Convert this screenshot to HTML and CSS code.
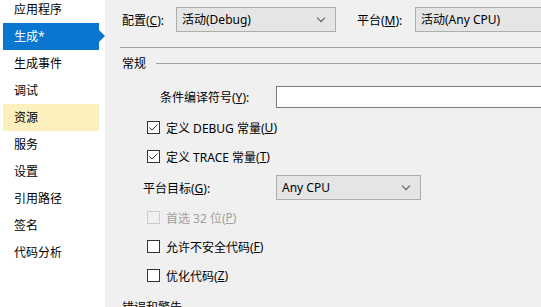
FILE: index.html
```html
<!DOCTYPE html>
<html lang="zh-CN">
<head>
    <meta charset="UTF-8">
    <title>生成</title>
    <link rel="stylesheet" href="styles.css">
</head>
<body>
    <div class="window">
        <ul class="nav">
            <li>应用程序</li>
            <li class="active">生成*</li>
            <li>生成事件</li>
            <li>调试</li>
            <li class="hover">资源</li>
            <li>服务</li>
            <li>设置</li>
            <li>引用路径</li>
            <li>签名</li>
            <li>代码分析</li>
        </ul>

        <div class="main">
            <div class="toolbar">
                <span class="label config-label">配置(<u>C</u>):</span>
                <div class="select config-select">活动(Debug)<span class="chev"></span></div>
                <span class="label platform-label">平台(<u>M</u>):</span>
                <div class="select platform-select">活动(Any CPU)</div>
            </div>

            <div class="rule"></div>

            <div class="group-title"><span>常规</span></div>

            <div class="row input-row">
                <span class="label symbols-label">条件编译符号(<u>Y</u>):</span>
                <div class="textbox"></div>
            </div>

            <label class="check first">
                <span class="box"><svg viewBox="0 0 11 11" width="11" height="11"><polyline points="1.5,5.5 4,8 9.5,2.5" /></svg></span>定义 DEBUG 常量(<u>U</u>)
            </label>
            <label class="check">
                <span class="box"><svg viewBox="0 0 11 11" width="11" height="11"><polyline points="1.5,5.5 4,8 9.5,2.5" /></svg></span>定义 TRACE 常量(<u>T</u>)
            </label>

            <div class="row target-row">
                <span class="label target-label">平台目标(<u>G</u>):</span>
                <div class="select target-select">Any CPU<span class="chev"></span></div>
            </div>

            <label class="check disabled">
                <span class="box"></span>首选 32 位(<u>P</u>)
            </label>
            <label class="check">
                <span class="box"></span>允许不安全代码(<u>F</u>)
            </label>
            <label class="check">
                <span class="box"></span>优化代码(<u>Z</u>)
            </label>

            <div class="group-title last"><span>错误和警告</span></div>
        </div>
    </div>
</body>
</html>
```

FILE: styles.css
```css
html, body {
    margin: 0;
    padding: 0;
}
body {
    width: 541px;
    height: 307px;
    overflow: hidden;
    background-color: #f0f0f0;
    font-family: "Noto Sans", "Noto Sans CJK SC", sans-serif;
    font-size: 12px;
    color: #000;
}
u {
    text-decoration: underline;
    text-underline-offset: 1px;
}
.window {
    display: flex;
    height: 307px;
}

/* left navigation */
.nav {
    list-style: none;
    margin: 0;
    padding: 0 0 0 3px;
    width: 102px;
    flex: none;
    background-color: #fff;
    margin-top: -4px;
}
.nav li {
    position: relative;
    width: 85px;
    height: 27px;
    line-height: 27px;
    padding-left: 11px;
}
.nav li.active {
    background-color: #0a76cf;
    color: #fff;
}
.nav li.active::after {
    content: "";
    position: absolute;
    left: 96px;
    top: 7px;
    border-top: 6px solid transparent;
    border-bottom: 6px solid transparent;
    border-left: 6px solid #0a76cf;
}
.nav li.hover {
    background-color: #fcf0bf;
}

/* main panel */
.main {
    flex: 1;
    padding-left: 15px;
    min-width: 0;
    overflow: hidden;
}
.label {
    white-space: nowrap;
    flex: none;
}
.toolbar {
    display: flex;
    align-items: center;
    padding: 7px 0 0 2px;
    height: 25px;
}
.config-label {
    width: 54px;
}
.platform-label {
    width: 58px;
    margin-left: 21px;
}
.select {
    position: relative;
    box-sizing: border-box;
    height: 25px;
    line-height: 23px;
    border: 1px solid #adadad;
    background-color: #e5e5e5;
    padding-left: 5px;
    white-space: nowrap;
    flex: none;
}
.config-select {
    width: 160px;
}
.platform-select {
    width: 140px;
}
.chev {
    position: absolute;
    right: 11px;
    top: 7px;
    width: 5px;
    height: 5px;
    border-right: 1px solid #555;
    border-bottom: 1px solid #555;
    transform: rotate(45deg);
}
.rule {
    height: 1px;
    background-color: #a0a0a0;
    margin-top: 15px;
}
.group-title {
    display: flex;
    align-items: center;
    height: 16px;
    margin-top: 7px;
    padding-left: 2px;
}
.group-title::after {
    content: "";
    flex: 1;
    height: 1px;
    background-color: #a0a0a0;
    margin-left: 10px;
}
.group-title.last {
    margin-top: 9px;
}
.row {
    display: flex;
    align-items: center;
}
.input-row {
    height: 22px;
    margin-top: 15px;
}
.symbols-label {
    width: 116px;
    padding-left: 40px;
}
.textbox {
    flex: 1;
    box-sizing: border-box;
    height: 22px;
    background-color: #fff;
    border: 1px solid #7a7a7a;
    border-right: none;
}
.target-row {
    height: 25px;
    margin-top: 4px;
}
.target-label {
    width: 133px;
    padding-left: 23px;
}
.target-select {
    width: 145px;
}
.check {
    display: flex;
    align-items: center;
    height: 29px;
    padding-left: 27px;
}
.check.first {
    margin-top: 5px;
}
.check.disabled {
    margin-top: 3px;
    color: #a0a0a0;
}
.box {
    box-sizing: border-box;
    display: flex;
    width: 13px;
    height: 13px;
    border: 1px solid #333;
    background-color: #fff;
    margin-right: 6px;
    flex: none;
}
.box polyline {
    fill: none;
    stroke: #333;
    stroke-width: 1;
}
.check.disabled .box {
    border-color: #cccccc;
    background-color: #f0f0f0;
}
```
